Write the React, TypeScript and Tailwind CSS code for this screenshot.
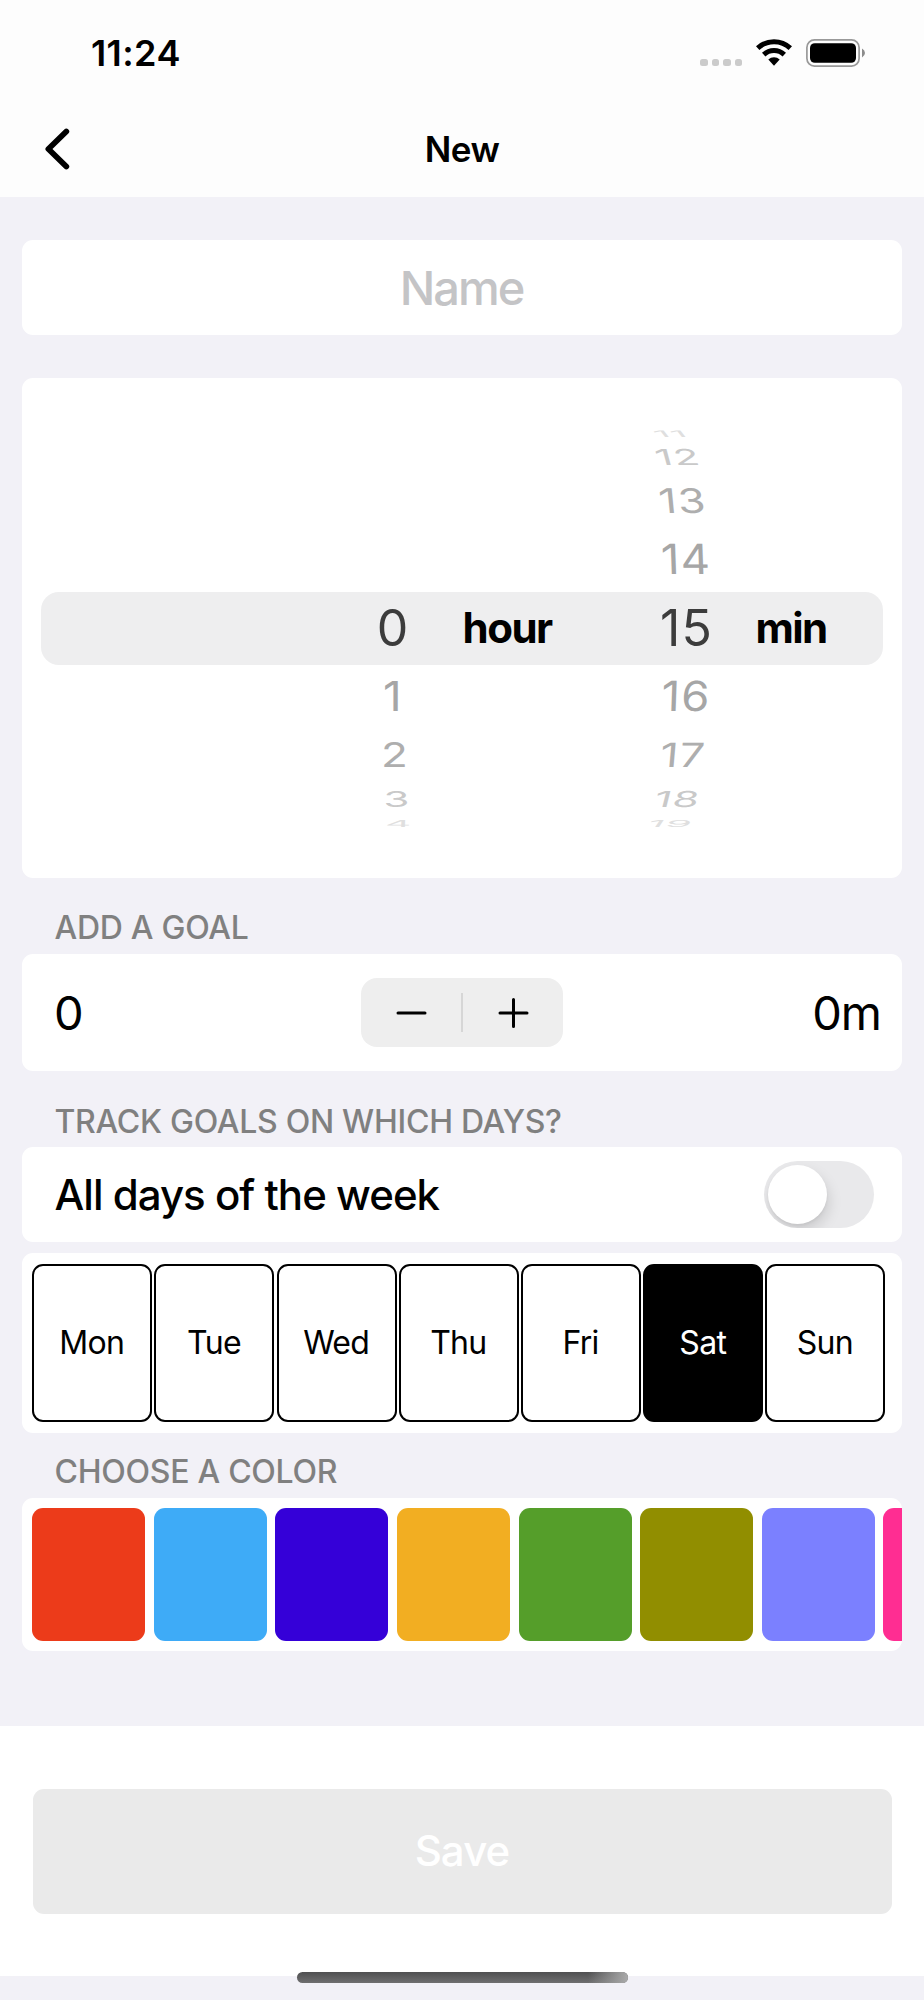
type WheelItem = { value: string; look: string };

const HOURS_BELOW: WheelItem[] = [
  { value: "1", look: "row-start-6 text-[#a6a6a6] [transform:translateX(0px)_scale(0.92,0.83)]" },
  { value: "2", look: "row-start-7 text-[#aeaeae] [transform:translateX(2px)_scale(0.88,0.67)]" },
  { value: "3", look: "row-start-8 text-[#c9c9c9] [transform:translateX(4px)_scale(0.84,0.44)]" },
  { value: "4", look: "row-start-9 text-[#dfdfdf] [transform:translateX(5.5px)_skewX(-2deg)_scale(0.82,0.19)]" },
];

const MINUTES: WheelItem[] = [
  { value: "11", look: "row-start-1 text-[#dfdfdf] [transform:translateX(-16.5px)_skewX(38deg)_scale(0.78,0.18)]" },
  { value: "12", look: "row-start-2 text-[#c9c9c9] [transform:translateX(-9.5px)_skewX(15deg)_scale(0.84,0.44)]" },
  { value: "13", look: "row-start-3 text-[#aeaeae] [transform:translateX(-4.5px)_skewX(5.5deg)_scale(0.89,0.68)]" },
  { value: "14", look: "row-start-4 text-[#a6a6a6] [transform:translateX(-1px)_skewX(2deg)_scale(0.91,0.83)]" },
  { value: "15", look: "row-start-5 text-[#3c3c3c]" },
  { value: "16", look: "row-start-6 text-[#a6a6a6] [transform:translateX(-1px)_skewX(-2deg)_scale(0.91,0.83)]" },
  { value: "17", look: "row-start-7 text-[#aeaeae] [transform:translateX(-4px)_skewX(-5deg)_scale(0.89,0.67)]" },
  { value: "18", look: "row-start-8 text-[#c9c9c9] [transform:translateX(-9.5px)_skewX(-14deg)_scale(0.85,0.44)]" },
  { value: "19", look: "row-start-9 text-[#dfdfdf] [transform:translateX(-16.5px)_skewX(-34deg)_scale(0.83,0.19)]" },
];

const DAYS = ["Mon", "Tue", "Wed", "Thu", "Fri", "Sat", "Sun"];
const SELECTED_DAY = "Sat";

const COLORS = [
  "bg-[#ec3b1a]",
  "bg-[#3eabf7]",
  "bg-[#3500d8]",
  "bg-[#f2ae22]",
  "bg-[#559e2a]",
  "bg-[#918e00]",
  "bg-[#7b80ff]",
  "bg-[#ff2d92]",
];

function StatusBar() {
  return (
    <div className="flex h-[105px] items-center justify-between pl-[91px] pr-[59px]">
      <span className="text-[36px] font-semibold leading-none tracking-[0.4px]">11:24</span>
      <div className="flex items-center">
        <div className="mt-[20px] flex gap-1">
          <i className="size-[7.5px] rounded-[2.5px] bg-[#cbcbcb]" />
          <i className="size-[7.5px] rounded-[2.5px] bg-[#cbcbcb]" />
          <i className="size-[7.5px] rounded-[2.5px] bg-[#cbcbcb]" />
          <i className="size-[7.5px] rounded-[2.5px] bg-[#cbcbcb]" />
        </div>
        <svg className="ml-[14px] h-[27px] w-[36px]" viewBox="0 0 36 27">
          <path d="M1.7 9.1A24 24 0 0 1 34.3 9.1M7.7 15.6A15.2 15.2 0 0 1 28.3 15.6" fill="none" stroke="#000" strokeWidth="5" />
          <path d="M18 26.7L12.3 20.5A8.4 8.4 0 0 1 23.7 20.5Z" />
        </svg>
        <svg className="ml-[14px] h-[28px] w-[59px]" viewBox="0 0 59 28">
          <rect x="0.9" y="0.9" width="52.2" height="26.2" rx="7.6" fill="none" stroke="#999" strokeWidth="1.7" />
          <rect x="4" y="4.2" width="46" height="19.6" rx="4.8" />
          <path d="M56 9.6Q59 11.2 59 14T56 18.4Z" fill="#8c8c8c" />
        </svg>
      </div>
    </div>
  );
}

function SectionLabel({ children, className }: { children: string; className: string }) {
  return (
    <h2 className={`flex items-center pl-[32.5px] text-[32px] font-medium leading-none tracking-[-0.27px] text-[#808080] ${className}`}>
      {children}
    </h2>
  );
}

function DurationPicker() {
  const cell = "flex items-center justify-center text-[50px] leading-none tracking-[1.2px]";
  return (
    <section className="mt-[43px] h-[500px] rounded-[11px] bg-white px-[19px] pt-[47.6px]">
      <div className="grid grid-cols-[302px_100px_193.5px_100px_1fr] grid-rows-[14.8px_33.2px_53.8px_64.6px_73px_62.6px_54.8px_33.2px_15.8px]">
        <div className="col-span-full col-start-1 row-start-5 rounded-[18px] bg-[#eeeeef]" />
        <span className={`${cell} col-start-2 row-start-5 text-[#3c3c3c]`}>0</span>
        {HOURS_BELOW.map((h) => (
          <span key={h.value} className={`${cell} col-start-2 ${h.look}`}>{h.value}</span>
        ))}
        <b className="col-start-3 row-start-5 flex items-center pl-[19.5px] text-[42px] font-bold leading-none tracking-[-1.5px]">hour</b>
        {MINUTES.map((m) => (
          <span key={m.value} className={`${cell} col-start-4 ${m.look}`}>{m.value}</span>
        ))}
        <b className="col-start-5 row-start-5 flex items-center pl-[19px] text-[42px] font-bold leading-none tracking-[-1.6px]">min</b>
      </div>
    </section>
  );
}

function Stepper() {
  return (
    <div className="flex h-[69px] w-[202px] items-center rounded-[16px] bg-[#eeeeee]">
      <button className="flex flex-1 justify-center" aria-label="Decrease">
        <svg width="31" height="31" viewBox="0 0 31 31" fill="none" stroke="#000" strokeWidth="3" strokeLinecap="round">
          <path d="M2 16H29" />
        </svg>
      </button>
      <div className="h-[39px] w-[2px] bg-[#d6d6d6]" />
      <button className="flex flex-1 justify-center" aria-label="Increase">
        <svg width="31" height="31" viewBox="0 0 31 31" fill="none" stroke="#000" strokeWidth="3" strokeLinecap="round">
          <path d="M2 16H29M15.5 2.5V29.5" />
        </svg>
      </button>
    </div>
  );
}

export default function App() {
  return (
    <div className="relative flex h-[2000px] w-[924px] flex-col overflow-hidden bg-[#f2f1f7] font-[Inter,sans-serif] text-black">
      <header className="h-[197px] bg-[#fdfdfd]">
        <StatusBar />
        <div className="grid h-[88px] grid-cols-[1fr_auto_1fr] items-center pl-[44px] pr-[44px]">
          <svg width="28" height="44" viewBox="0 0 28 44" fill="none" stroke="#000" strokeWidth="5.8" strokeLinecap="round" strokeLinejoin="round">
            <path d="M22.3 4.5L4.4 22L22.3 39.5" />
          </svg>
          <h1 className="text-[35px] font-semibold leading-none tracking-[-0.5px]">New</h1>
        </div>
      </header>

      <main className="flex flex-col px-[22px] pt-[43px]">
        <div className="flex h-[95px] items-center justify-center rounded-[11px] bg-white pr-[1px] text-[47px] font-medium leading-none tracking-[-2px] text-[#c4c4c6]">
          Name
        </div>

        <DurationPicker />

        <SectionLabel className="h-[75.5px] pt-[25px]">ADD A GOAL</SectionLabel>
        <section className="grid h-[117px] grid-cols-[1fr_auto_1fr] items-center rounded-[11px] bg-white text-[47px] leading-none">
          <span className="pl-[32px]">0</span>
          <Stepper />
          <span className="pr-[21px] text-right tracking-[-1px]">0m</span>
        </section>

        <SectionLabel className="h-[76.5px] pt-[25.5px]">TRACK GOALS ON WHICH DAYS?</SectionLabel>
        <section className="flex h-[95px] items-center justify-between rounded-[11px] bg-white pl-[32.5px] pr-[28px]">
          <span className="text-[42px] font-medium leading-none tracking-[-0.98px]">All days of the week</span>
          <div className="flex h-[67px] w-[110px] items-center overflow-hidden rounded-full bg-[#e9e9eb] pl-[4px]">
            <div className="size-[59px] rounded-full bg-white shadow-[2px_7px_14px_rgba(0,0,0,0.13),0_2px_3px_rgba(0,0,0,0.05)]" />
          </div>
        </section>

        <section className="mt-[11px] flex h-[179.5px] gap-[2.2px] rounded-[11px] bg-white px-[10.3px] py-[10.5px]">
          {DAYS.map((d) => (
            <button
              key={d}
              className={`flex h-[158.5px] w-[120px] items-center justify-center rounded-[11px] border-2 border-black pr-[1px] text-[32px] leading-none tracking-[-0.7px] ${
                d === SELECTED_DAY ? "bg-black text-white" : "bg-white text-black"
              }`}
            >
              {d}
            </button>
          ))}
        </section>

        <SectionLabel className="h-[65px] pt-[13px]">CHOOSE A COLOR</SectionLabel>
        <section className="flex h-[153.5px] gap-[8.6px] overflow-hidden rounded-[11px] bg-white px-[10.2px] pt-[10.5px]">
          {COLORS.map((c) => (
            <div key={c} className={`h-[132.5px] w-[113px] shrink-0 rounded-[11px] ${c}`} />
          ))}
        </section>
      </main>

      <footer className="mt-[75px] flex h-[250px] items-start bg-white px-[32.5px] pt-[63px]">
        <button className="flex h-[124.5px] w-full items-center justify-center rounded-[11px] bg-[#eaeaea] text-[42px] font-medium leading-none tracking-[-0.9px] text-white">
          Save
        </button>
      </footer>

      <div className="absolute left-[297px] top-[1971.5px] h-[11.5px] w-[330.5px] overflow-hidden rounded-full bg-linear-to-b from-[#4f4f50] to-[#6f6f70]">
        <div className="ml-auto h-full w-[40px] bg-linear-to-r from-transparent to-[#aaaaaa]" />
      </div>
    </div>
  );
}
